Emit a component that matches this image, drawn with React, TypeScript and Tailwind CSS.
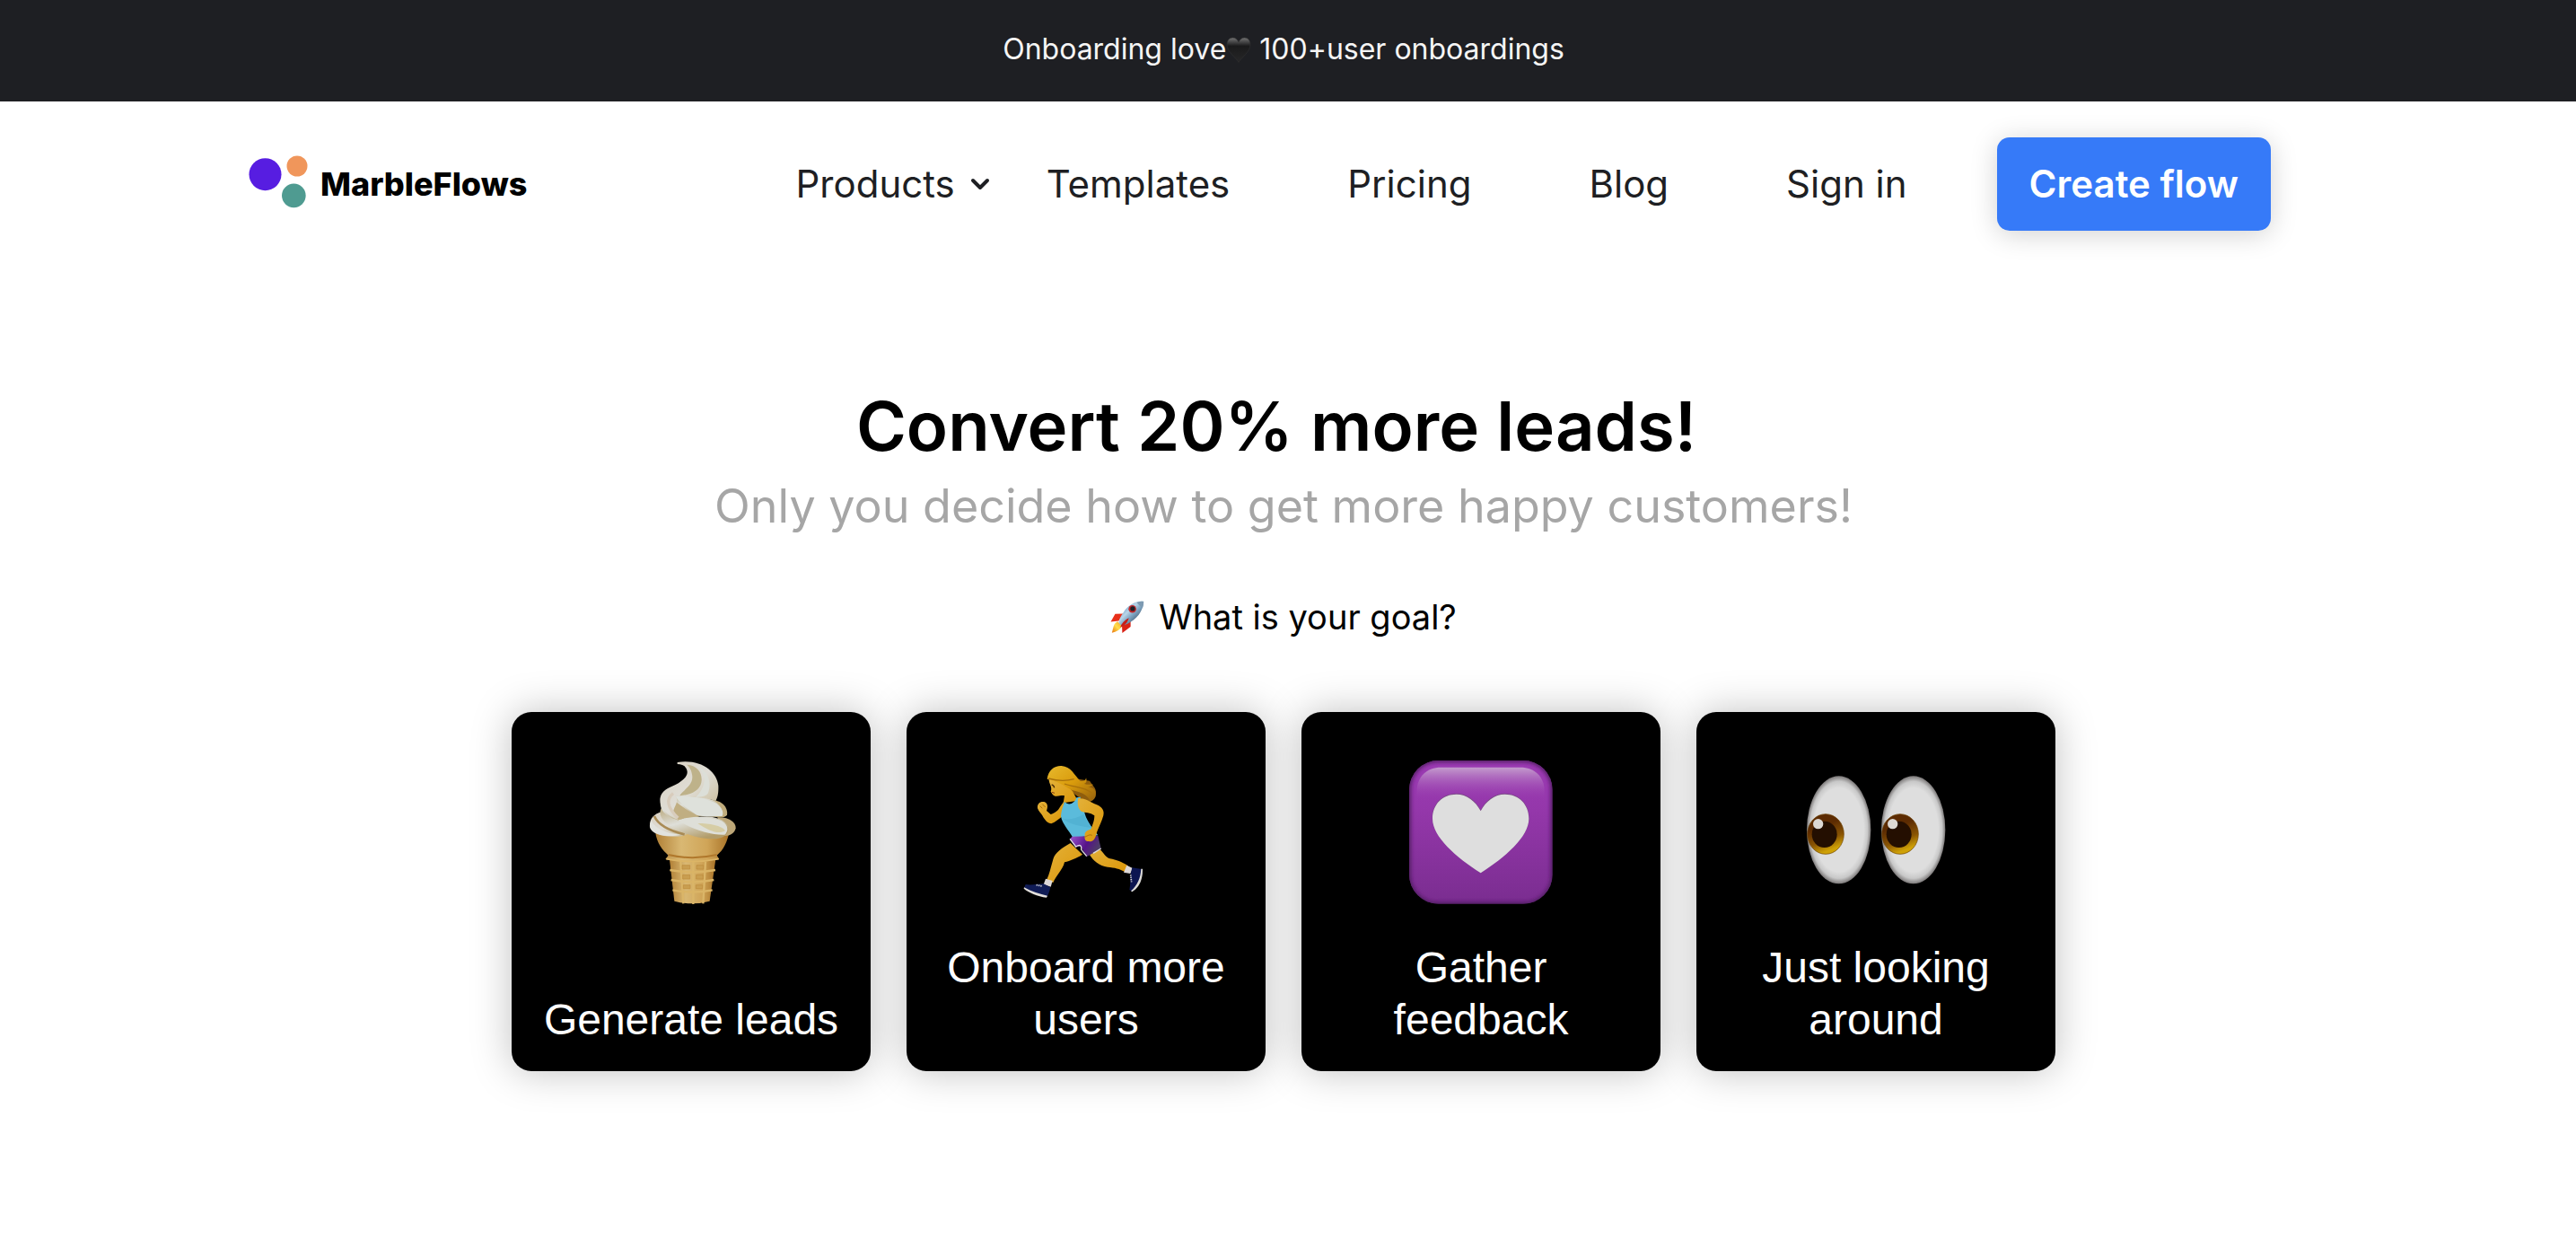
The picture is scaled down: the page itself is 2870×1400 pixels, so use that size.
import React from "react";
import { ChevronDown } from "lucide-react";

const links = [
    { label: "Templates", href: "#templates" },
    { label: "Pricing", href: "#pricing" },
    { label: "Blog", href: "#blog" },
    { label: "Sign in", href: "#signin" },
];

function BlackHeart() {
    return (
        <svg viewBox="0 0 28 29" className="inline-block w-7 h-[29px] align-[-4px]" aria-hidden="true">
            <defs>
                <linearGradient id="bh" x1="0" y1="0" x2="0" y2="1">
                    <stop offset="0" stopColor="#757575" />
                    <stop offset="0.18" stopColor="#444445" />
                    <stop offset="0.34" stopColor="#1a1a1b" />
                    <stop offset="1" stopColor="#272728" />
                </linearGradient>
            </defs>
            <path
                d="M14 28.5C11 23 1 17 1 8.500C1 4 3.500 1 7.500 1C10.500 1 13 3 14 6C15 3 17.500 1 20.500 1C24.500 1 27 4 27 8.500C27 17 17 23 14 28.500Z"
                fill="url(#bh)"
                stroke="#303031"
                strokeWidth="0.6"
            />
        </svg>
    );
}

function Logo() {
    return (
        <svg viewBox="50 68 198 176" className="w-[66px] h-[59px] mb-1.5 shrink-0" aria-hidden="true">
            <circle cx="105.500" cy="131" r="54" fill="#571de1" />
            <circle cx="212" cy="103.500" r="34.500" fill="#f0965b" />
            <circle cx="201" cy="202" r="40" fill="#4f9b91" />
        </svg>
    );
}

function Rocket() {
    return (
        <svg viewBox="44 22 114 112" className="w-[38px] h-[37px] shrink-0" aria-hidden="true">
            <defs>
                <linearGradient id="rk-body" x1="0" y1="0" x2="1" y2="1">
                    <stop offset="0.15" stopColor="#5b94c4" />
                    <stop offset="0.4" stopColor="#b9d5e8" />
                    <stop offset="0.55" stopColor="#7fa6c4" />
                    <stop offset="0.85" stopColor="#35485c" />
                </linearGradient>
                <linearGradient id="rk-fire" x1="1" y1="0" x2="0" y2="1">
                    <stop offset="0" stopColor="#f59a1c" />
                    <stop offset="0.5" stopColor="#ffdf4d" />
                    <stop offset="1" stopColor="#e8740c" />
                </linearGradient>
            </defs>
            <path d="M88 66L60 67L45 93L72 90Z" fill="#e8301a" />
            <path d="M112 88L112 110L84 131L83 106Z" fill="#d92114" />
            <path d="M68 92C54 98 54 113 49 130C64 127 76 121 84 106Z" fill="url(#rk-fire)" />
            <path d="M156 25C130 22 105 36 88 61C78 75 73 86 72 97L81 106C96 103 108 98 122 87C145 69 154 48 156 25Z" fill="url(#rk-body)" />
            <path d="M156 25C148 24 140 25 132 28L152 48C155 41 156 33 156 25Z" fill="#7d9ab2" />
            <circle cx="118" cy="50" r="13" fill="#c4282a" />
            <circle cx="119" cy="49" r="8" fill="#1d2027" />
            <path d="M106 80C91 87 82 98 77 112C92 106 102 96 106 80Z" fill="#c81d17" />
        </svg>
    );
}

function IceCream() {
    return (
        <svg viewBox="388 202 480 480" className="w-40 h-40" aria-hidden="true">
            <defs>
                <linearGradient id="ic-cup" x1="0" y1="0" x2="1" y2="0">
                    <stop offset="0" stopColor="#b07f35" />
                    <stop offset="0.35" stopColor="#d9b873" />
                    <stop offset="0.7" stopColor="#d0a558" />
                    <stop offset="1" stopColor="#a87227" />
                </linearGradient>
                <linearGradient id="ic-a" x1="0" y1="0" x2="1" y2="1">
                    <stop offset="0" stopColor="#d9d0bf" />
                    <stop offset="0.5" stopColor="#dfddd6" />
                    <stop offset="1" stopColor="#c5b58c" />
                </linearGradient>
                <linearGradient id="ic-b" x1="0" y1="0" x2="0.6" y2="1">
                    <stop offset="0" stopColor="#b8a679" />
                    <stop offset="0.5" stopColor="#dedfd9" />
                    <stop offset="1" stopColor="#b29c69" />
                </linearGradient>
            </defs>
            <path d="M555 525L572 672Q632 688 690 672L711 525Z" fill="url(#ic-cup)" />
            <path d="M593 540L602 680M635 540V683M676 540L668 680" stroke="#dab568" strokeWidth="7" fill="none" />
            <path d="M557 568Q632 582 709 568M561 601Q632 615 704 601M566 635Q632 648 699 635" stroke="#dab466" strokeWidth="7" fill="none" />
            <path d="M598 552H624V565H598ZM646 552H669V565H646ZM600 584H624V598H600ZM645 584H668V598H645ZM602 618H625V630H602ZM644 618H666V630H644Z" fill="#c99e50" stroke="#bc8b3c" strokeWidth="2" />
            <path d="M508 440C514 480 532 502 552 519L542 532Q632 552 722 532L714 519C738 500 748 474 756 440Z" fill="url(#ic-cup)" />
            <path d="M552 517Q632 536 714 517" stroke="#b0782c" strokeWidth="6" fill="none" />
            <path d="M545 531Q632 548 720 531" stroke="#dcb566" strokeWidth="5" fill="none" />
            <path d="M532 373C500 380 488 400 490 424C494 446 528 456 566 456C590 457 606 454 620 446Z" fill="url(#ic-a)" />
            <path d="M494 402C508 430 545 446 596 450C540 462 492 446 490 420Z" fill="#e2e3de" />
            <path d="M505 388C518 418 560 438 606 449" stroke="#a98b55" strokeWidth="8" fill="none" />
            <path d="M716 392C754 390 778 408 777 428C774 446 754 456 736 454Z" fill="#bda778" />
            <path d="M532 356C514 380 530 404 560 422C602 446 650 464 700 464C744 464 760 440 750 418C738 396 700 386 654 390Z" fill="url(#ic-b)" />
            <path d="M584 402C620 386 690 388 730 404C752 416 754 438 740 450C700 452 640 436 584 402Z" fill="#dedfd8" />
            <path d="M650 412C690 412 730 420 742 436C724 450 690 440 650 412Z" fill="#d6cda5" />
            <path d="M694 334C730 334 752 358 748 384C740 394 724 392 708 390Z" fill="#c0ac7c" />
            <path d="M548 308C516 330 520 364 546 384C566 398 590 404 606 394C650 384 700 392 734 390C738 360 718 340 690 330C650 312 590 304 548 308Z" fill="url(#ic-b)" />
            <path d="M574 320C616 318 680 326 714 346C732 360 738 376 732 388C696 390 664 390 646 384C620 366 590 346 574 320Z" fill="#dee1db" />
            <path d="M560 322C584 350 620 372 656 390C630 390 600 394 584 402C550 382 540 344 560 322Z" fill="#c0ae82" />
            <path d="M582 208C660 196 714 238 719 286C720 312 716 328 710 337C690 330 640 322 576 320C588 342 572 352 568 374C570 390 590 402 584 400C552 390 518 356 525 326C530 302 552 294 574 284C602 270 620 252 614 234C610 220 598 214 582 214Z" fill="url(#ic-a)" />
            <path d="M614 216C650 218 668 246 662 276C656 304 626 316 590 320C598 300 642 286 630 244C628 232 622 224 614 216Z" fill="#beb28a" />
            <path d="M640 216C684 234 700 276 684 312C676 322 660 324 644 324C672 296 680 262 664 240C658 228 650 220 640 216Z" fill="#dcdfd8" />
            <path d="M568 312C544 330 546 358 584 394" stroke="#d8ccbc" strokeWidth="10" fill="none" />
        </svg>
    );
}

function Runner() {
    return (
        <svg viewBox="388 202 480 480" className="w-40 h-40" aria-hidden="true">
            <defs>
                <linearGradient id="rn-skin" x1="0" y1="0" x2="1" y2="1">
                    <stop offset="0" stopColor="#e3b13a" />
                    <stop offset="1" stopColor="#dc9708" />
                </linearGradient>
                <linearGradient id="rn-hair" x1="0" y1="0" x2="1" y2="1">
                    <stop offset="0" stopColor="#e7b92d" />
                    <stop offset="0.5" stopColor="#d99b0c" />
                    <stop offset="1" stopColor="#94600c" />
                </linearGradient>
                <linearGradient id="rn-short" x1="0" y1="0" x2="1" y2="0.4">
                    <stop offset="0" stopColor="#9c55cf" />
                    <stop offset="0.6" stopColor="#561388" />
                    <stop offset="1" stopColor="#4d3f66" />
                </linearGradient>
            </defs>
            {/* back leg */}
            <path d="M638 514C652 538 672 554 700 558C724 560 740 564 758 574L768 554C746 540 730 534 708 530C694 526 688 514 676 500Z" fill="url(#rn-skin)" />
            <path d="M764 552L784 562L776 580L754 576Z" fill="#ddd8d8" />
            <path d="M782 560L816 565C818 596 806 622 782 640L773 634C778 612 774 594 778 578Z" fill="#0c1551" />
            <path d="M812 564L817 564C818 600 806 626 782 641L778 638C800 618 810 596 812 564Z" fill="#dcdad6" />
            <path d="M777 584L780 608" stroke="#ddd" strokeWidth="5" strokeDasharray="4 3" />
            {/* front leg */}
            <path d="M576 478C548 494 524 510 518 532C510 560 506 580 496 602L518 610C528 586 550 568 556 542C576 536 594 530 616 516Z" fill="url(#rn-skin)" />
            <path d="M493 597L516 604L510 624L486 616Z" fill="#ddd8d8" />
            <path d="M426 616C446 620 466 614 486 614L509 626C506 640 502 650 497 657C470 652 438 642 421 628Z" fill="#101c56" />
            <path d="M421 626C446 640 474 648 499 654L496 660C466 656 436 644 420 630Z" fill="#e2dfdb" />
            <path d="M462 618L482 622" stroke="#ddd" strokeWidth="5" strokeDasharray="4 3" />
            {/* hair and head */}
            <path d="M554 270C574 306 602 330 642 340C666 322 664 302 654 290L640 270L590 262Z" fill="#8f5d0d" />
            <path d="M504 268C506 284 516 292 510 306C516 314 518 322 530 321C542 320 548 318 556 320L552 344L600 336L584 306C570 290 548 266 504 262Z" fill="url(#rn-skin)" />
            <path d="M513 283Q520 284 522 293" stroke="#4a2c08" strokeWidth="4" fill="none" />
            <path d="M514 308L523 311" stroke="#8b3d10" strokeWidth="3" />
            <path d="M498 264C502 234 522 219 546 220C578 222 588 250 608 270C618 274 628 268 628 260C632 272 628 278 622 280C634 284 644 282 652 282C646 288 640 290 634 290C654 294 664 300 660 322C656 332 648 338 642 338C630 312 606 308 584 302C566 296 546 274 498 264Z" fill="url(#rn-hair)" />
            <path d="M502 262C536 272 560 272 588 264M556 280C586 292 624 290 646 310" stroke="#a8700b" strokeWidth="4" fill="none" />
            {/* far arm */}
            <path d="M556 336L542 356C534 372 522 378 510 382L496 370C500 358 502 346 488 340C474 338 464 346 466 362C470 374 478 378 482 386C490 402 500 412 512 413C526 408 538 396 550 388Z" fill="url(#rn-skin)" />
            <path d="M474 354L482 362M482 348L492 358" stroke="#ac7008" strokeWidth="3" />
            {/* shirt */}
            <path d="M556 340C568 352 588 350 596 326L610 324C604 346 608 362 622 372C628 398 640 416 668 452L584 460C570 434 548 414 544 388C546 366 552 352 556 340Z" fill="#5bbbdb" />
            <path d="M550 396C572 402 594 396 620 382C628 400 638 414 648 428C614 420 580 420 550 396Z" fill="#52b2d3" />
            {/* shorts */}
            <path d="M582 456L668 454L678 496L630 524L610 488L594 492L574 464Z" fill="url(#rn-short)" />
            <path d="M574 464L594 490C606 482 614 484 612 500L630 522M652 512L678 496" stroke="#dfdce2" strokeWidth="4" fill="none" />
            {/* near arm */}
            <path d="M602 328C622 326 642 340 664 350C682 358 690 370 686 386C680 408 670 426 664 442C660 464 650 476 638 472C626 474 622 466 624 452C622 440 634 434 644 432C652 412 656 400 656 386C642 374 626 378 612 372C600 362 598 344 602 328Z" fill="url(#rn-skin)" />
            <path d="M624 458C632 454 640 448 648 452" stroke="#a96c08" strokeWidth="3" fill="none" />
        </svg>
    );
}

function HeartTile() {
    return (
        <svg viewBox="388 202 480 480" className="w-40 h-40" aria-hidden="true">
            <defs>
                <linearGradient id="ht-bg" x1="0" y1="0" x2="0" y2="1">
                    <stop offset="0" stopColor="#9c3bb4" />
                    <stop offset="0.35" stopColor="#9437aa" />
                    <stop offset="1" stopColor="#7a2d90" />
                </linearGradient>
                <linearGradient id="ht-gloss" x1="0" y1="0" x2="0" y2="1">
                    <stop offset="0" stopColor="#c49ccd" />
                    <stop offset="1" stopColor="#9839ae" stopOpacity="0" />
                </linearGradient>
                <clipPath id="ht-clip">
                    <rect x="388" y="202" width="479" height="479" rx="98" />
                </clipPath>
                <filter id="ht-blur">
                    <feGaussianBlur stdDeviation="7" />
                </filter>
            </defs>
            <g clipPath="url(#ht-clip)">
                <rect x="388" y="202" width="479" height="479" fill="url(#ht-bg)" />
                <rect x="386" y="200" width="483" height="483" rx="98" fill="none" stroke="#4f1a60" strokeWidth="16" filter="url(#ht-blur)" />
            </g>
            <path d="M414 335V302C414 256 448 225 494 225H760C806 225 840 256 840 302V335Z" fill="url(#ht-gloss)" />
            <path d="M627 368C610 334 580 312 546 312C500 312 465 346 465 394C465 456 546 524 627 578C708 524 789 456 789 394C789 346 754 312 708 312C674 312 644 334 627 368Z" fill="#7a4a86" />
            <path d="M627 371C610 338 580 315 546 315C500 315 466 348 466 396C466 458 546 525 627 578C708 525 788 458 788 396C788 348 754 315 708 315C674 315 644 338 627 371Z" fill="#dedede" />
        </svg>
    );
}

function Eyes() {
    return (
        <svg viewBox="388 202 480 480" className="w-40 h-40" aria-hidden="true">
            <defs>
                <radialGradient id="ey-white">
                    <stop offset="0.78" stopColor="#dedede" />
                    <stop offset="0.9" stopColor="#c8c8c8" />
                    <stop offset="1" stopColor="#7b7878" />
                </radialGradient>
                <linearGradient id="ey-iris" x1="0.3" y1="0" x2="0.65" y2="1">
                    <stop offset="0.3" stopColor="#5c2b02" />
                    <stop offset="0.65" stopColor="#8a5503" />
                    <stop offset="0.9" stopColor="#cfa106" />
                </linearGradient>
            </defs>
            {[0, 249].map((x) => (
                <g key={x} transform={`translate(${x} 0)`}>
                    <ellipse cx="504" cy="434" rx="107" ry="180" fill="url(#ey-white)" />
                    <ellipse cx="460" cy="448" rx="61" ry="67" fill="url(#ey-iris)" stroke="#6d4205" strokeWidth="2" />
                    <ellipse cx="456" cy="449" rx="42" ry="44" fill="#240f01" />
                    <circle cx="435" cy="414" r="17" fill="#dcd8d4" />
                </g>
            ))}
        </svg>
    );
}

const goals = [
    { label: "Generate leads", Icon: IceCream },
    { label: "Onboard more users", Icon: Runner },
    { label: "Gather feedback", Icon: HeartTile },
    { label: "Just looking around", Icon: Eyes },
];

export default function App() {
    return (
        <div className="min-h-screen bg-white font-['Inter',sans-serif] text-black">
            <div className="bg-[#1e1f23] text-[#f5f5f5] text-[32px] leading-[48px] pt-[31px] pb-[34px] pr-[10px] text-center">
                Onboarding love
                <BlackHeart /> 100+user onboardings
            </div>

            <header className="flex items-center pt-10 pl-[277px] pr-[340px] text-[#1e1f23] text-[42px] leading-[48px]">
                <a href="#home" className="flex items-center gap-[14px] mr-auto text-black text-[36px] font-extrabold">
                    <Logo />
                    MarbleFlows
                </a>
                <nav className="flex items-center">
                    <button type="button" className="flex items-center gap-3">
                        Products
                        <ChevronDown className="w-8 h-8" strokeWidth={3} />
                    </button>
                    <div className="flex items-center gap-[131px] ml-[58px] mr-[100px]">
                        {links.map((link) => (
                            <a key={link.label} href={link.href}>{link.label}</a>
                        ))}
                    </div>
                </nav>
                <button
                    type="button"
                    className="bg-[#367af8] text-white font-semibold rounded-[14px] px-9 py-7 shadow-[0_4px_30px_rgba(0,0,0,0.18)]"
                >
                    Create flow
                </button>
            </header>

            <main className="flex flex-col items-center pt-[173px] pr-[10px]">
                <h1 className="text-[76px] leading-[88px] font-semibold pr-4">Convert 20% more leads!</h1>
                <p className="mt-[14px] text-[52px] leading-[64px] text-[#a6a6a6]">
                    Only you decide how to get more happy customers!
                </p>
                <h2 className="flex items-center gap-4 mt-[67px] text-[38px] leading-[48px]">
                    <Rocket />
                    What is your goal?
                </h2>
                <div className="flex flex-wrap justify-center gap-10 mt-[82px]">
                    {goals.map(({ label, Icon }) => (
                        <button
                            key={label}
                            type="button"
                            className="flex flex-col items-center justify-between w-[400px] h-[400px] px-[30px] pt-[54px] pb-7 rounded-[22px] bg-black text-white font-['Liberation_Sans',Arial,sans-serif] text-[48px] leading-[58px] shadow-[0_0_45px_rgba(0,0,0,0.25)]"
                        >
                            <Icon />
                            <span>{label}</span>
                        </button>
                    ))}
                </div>
            </main>
        </div>
    );
}
